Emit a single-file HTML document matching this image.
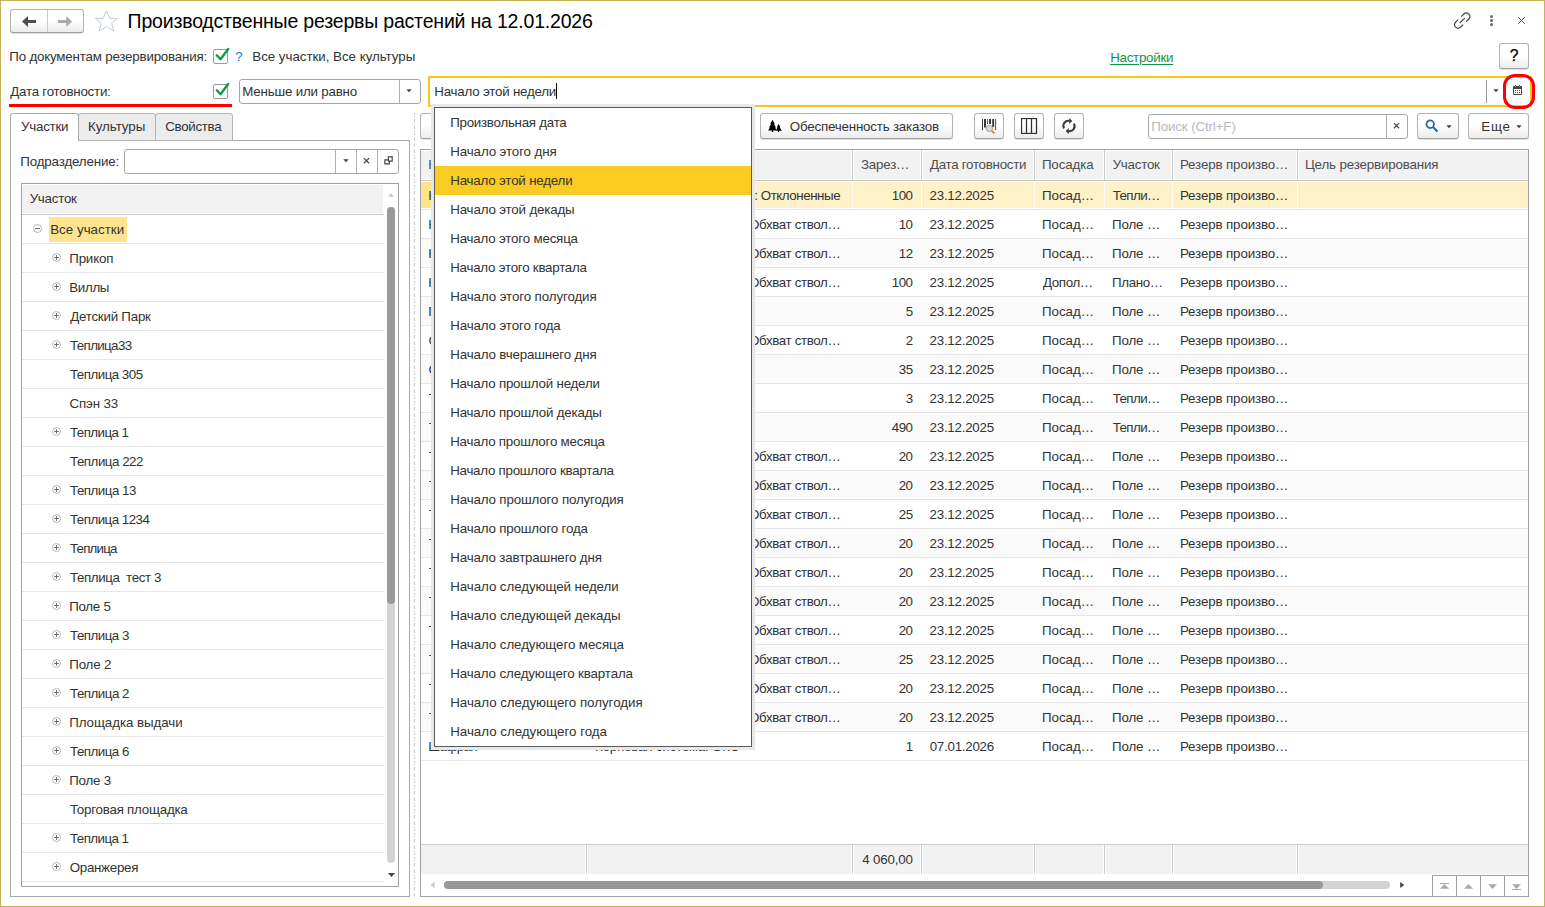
<!DOCTYPE html><html lang="ru"><head><meta charset="utf-8"><title>Производственные резервы растений</title><style>
*{box-sizing:border-box;margin:0;padding:0}
html,body{width:1545px;height:907px;overflow:hidden;background:#fff}
body{font-family:"Liberation Sans",sans-serif;font-size:13.33px;color:#333;position:relative}
.a{position:absolute}
.t{position:absolute;white-space:nowrap;line-height:18px;height:18px}
.btn{position:absolute;border:1px solid #b2b2b2;border-bottom-color:#9f9f9f;border-radius:3px;background:linear-gradient(#fff 45%,#ececec);box-shadow:0 1px 0 #e2e2e2}
.inp{position:absolute;border:1px solid #a6a6a6;border-radius:3px;background:#fff}
.hl{position:absolute;background:#e6e6e6;height:1px}
.vl{position:absolute;background:#cfcfcf;width:1px}
.row{position:absolute;left:0;height:28px}
</style></head><body>
<div class="a" style="left:0;top:0;width:1545px;height:907px;border:1px solid #c3b25a"></div>
<div class="btn" style="left:10px;top:9px;width:74px;height:24px;border-radius:3px"></div>
<div class="a" style="left:47px;top:10px;width:1px;height:22px;background:#c8c8c8"></div>
<svg class="a" style="left:10px;top:9px" width="74" height="24" viewBox="0 0 74 24"><path d="M12 12.5 L18 6.9 V11 H26 V14 H18 V18.1 Z" fill="#4d4d4d"/><path d="M62 12.5 L56.2 6.9 V11 H48 V14 H56.2 V18.1 Z" fill="#a9a9a9"/></svg>
<svg class="a" style="left:94px;top:10px" width="25" height="24" viewBox="0 0 25 24"><path d="M12.4 0.8 L15.7 8.3 H23.4 L17.5 13.4 L19.9 21.2 L12.4 16.6 L5 21.2 L7.4 13.4 L1.5 8.3 H9.2 Z" fill="#fff" stroke="#bcc5ce" stroke-width="0.9"/></svg>
<div class="t" style="left:127.62px;top:8px;letter-spacing:-0.191px;font-size:19.5px;line-height:26px;height:26px;color:#000">Производственные резервы растений на 12.01.2026</div>
<svg class="a" style="left:1451px;top:10px" width="21" height="21" viewBox="-10.5 -10.5 21 21" fill="none" stroke="#454545" stroke-width="1.15" stroke-linecap="round"><g transform="translate(0.7,0.1) rotate(-45)"><path d="M2.6 -3.5 H5.8 A3.5 3.5 0 0 1 5.8 3.5 H2.6"/><path d="M-2.6 3.5 H-5.8 A3.5 3.5 0 0 1 -5.8 -3.5 H-2.6"/><path d="M-3 0 H3.2"/></g></svg>
<div class="a" style="left:1490px;top:15.0px;width:3px;height:3px;border-radius:50%;background:#666"></div>
<div class="a" style="left:1490px;top:19.0px;width:3px;height:3px;border-radius:50%;background:#666"></div>
<div class="a" style="left:1490px;top:23.0px;width:3px;height:3px;border-radius:50%;background:#666"></div>
<svg class="a" style="left:1517px;top:16px" width="9" height="9" viewBox="0 0 9 9"><path d="M1.2 1.2 L7.8 7.8 M7.8 1.2 L1.2 7.8" stroke="#555" stroke-width="1"/></svg>
<div class="t" style="left:9.32px;top:48.0px;letter-spacing:-0.193px;">По документам резервирования:</div>
<div class="a" style="left:213px;top:49px;width:15px;height:15px;border:1px solid #9c9c9c;border-radius:2px;background:#fff"></div>
<svg class="a" style="left:213px;top:47px" width="17" height="17" viewBox="0 0 17 17"><path d="M3.8 8.3 L7.5 12.2 L15.2 2" fill="none" stroke="#0a9b48" stroke-width="2.3" stroke-linecap="round" stroke-linejoin="round"/></svg>
<div class="t" style="left:235.35px;top:48.0px;color:#1874cd">?</div>
<div class="t" style="left:252.31px;top:48.0px;letter-spacing:-0.025px;">Все участки, Все культуры</div>
<div class="t" style="left:1110.21px;top:49.0px;letter-spacing:-0.268px;color:#0c9748;text-decoration:underline;text-underline-offset:1.5px">Настройки</div>
<div class="btn" style="left:1499px;top:43px;width:30px;height:26px"></div>
<div class="t" style="left:1499px;top:47px;width:30px;text-align:center;font-size:15.6px;color:#000;-webkit-text-stroke:0.25px #000">?</div>
<div class="t" style="left:10.30px;top:83.0px;letter-spacing:-0.235px;">Дата готовности:</div>
<div class="a" style="left:213px;top:84px;width:15px;height:15px;border:1px solid #9c9c9c;border-radius:2px;background:#fff"></div>
<svg class="a" style="left:213px;top:82px" width="17" height="17" viewBox="0 0 17 17"><path d="M3.8 8.3 L7.5 12.2 L15.2 2" fill="none" stroke="#0a9b48" stroke-width="2.3" stroke-linecap="round" stroke-linejoin="round"/></svg>
<div class="inp" style="left:239px;top:79px;width:182px;height:25px"></div>
<div class="a" style="left:399px;top:80px;width:1px;height:23px;background:#b0b0b0"></div>
<div class="t" style="left:242.31px;top:83.0px;letter-spacing:-0.198px;">Меньше или равно</div>
<svg class="a" style="left:406px;top:89px" width="6" height="4" viewBox="0 0 6 4"><path d="M0.3 0.2 H5.7 L3 3.3 Z" fill="#444"/></svg>
<div class="a" style="left:9px;top:104px;width:223px;height:2.8px;background:#f00"></div>
<div class="a" style="left:428px;top:76px;width:1104px;height:31px;border:2px solid #fbc41a;border-radius:1px;background:#fff"></div>
<div class="t" style="left:434.31px;top:83.0px;letter-spacing:-0.212px;">Начало этой недели</div>
<div class="a" style="left:556px;top:83px;width:1px;height:16px;background:#000"></div>
<div class="a" style="left:1486px;top:80px;width:1px;height:23px;background:#9a9a9a"></div>
<svg class="a" style="left:1493px;top:89px" width="6" height="4" viewBox="0 0 6 4"><path d="M0.3 0.2 H5.7 L3 3.3 Z" fill="#444"/></svg>
<svg class="a" style="left:1512px;top:84px" width="11" height="12" viewBox="0 0 11 12"><rect x="1" y="2" width="9" height="9" rx="0.9" fill="#444"/><rect x="3" y="1" width="1" height="1.2" fill="#444"/><rect x="7" y="1" width="1" height="1.2" fill="#444"/><rect x="3.1" y="2.1" width="0.8" height="0.8" fill="#ddd"/><rect x="7.1" y="2.1" width="0.8" height="0.8" fill="#ddd"/><rect x="2" y="5" width="7" height="5" fill="#fff"/><g fill="#444"><rect x="3" y="6" width="1" height="1"/><rect x="5" y="6" width="1" height="1"/><rect x="7" y="6" width="1" height="1"/><rect x="3" y="8" width="1" height="1"/><rect x="5" y="8" width="1" height="1"/><rect x="7" y="8" width="1" height="1"/></g></svg>
<div class="a" style="left:1503px;top:74.3px;width:32px;height:34.4px;border:3px solid #f00;border-radius:12px"></div>
<div class="a" style="left:10px;top:140px;width:400px;height:757px;border:1px solid #a9a9a9"></div>
<div class="a" style="left:78px;top:113px;width:78px;height:28px;border:1px solid #b4b4b4;border-radius:3px 3px 0 0;background:#ececec"></div>
<div class="t" style="left:87.91px;top:118.0px;letter-spacing:-0.023px;">Культуры</div>
<div class="a" style="left:155px;top:113px;width:78px;height:28px;border:1px solid #b4b4b4;border-radius:3px 3px 0 0;background:#ececec"></div>
<div class="t" style="left:165.32px;top:118.0px;letter-spacing:-0.322px;">Свойства</div>
<div class="a" style="left:10px;top:113px;width:69px;height:28px;border:1px solid #a9a9a9;border-bottom:none;border-radius:3px 3px 0 0;background:#fff"></div>
<div class="t" style="left:21.04px;top:118.0px;letter-spacing:-0.232px;">Участки</div>
<div class="t" style="left:20.32px;top:153.0px;letter-spacing:-0.149px;">Подразделение:</div>
<div class="inp" style="left:124px;top:149px;width:275px;height:25px"></div>
<div class="a" style="left:335px;top:150px;width:1px;height:23px;background:#b0b0b0"></div>
<div class="a" style="left:356px;top:150px;width:1px;height:23px;background:#b0b0b0"></div>
<div class="a" style="left:377px;top:150px;width:1px;height:23px;background:#b0b0b0"></div>
<svg class="a" style="left:342.5px;top:158.8px" width="6" height="4" viewBox="0 0 6 4"><path d="M0.3 0.2 H5.7 L3 3.3 Z" fill="#444"/></svg>
<svg class="a" style="left:363px;top:157px" width="7" height="7" viewBox="0 0 7 7"><path d="M0.9 1.1 L6.1 6.3 M6.1 1.1 L0.9 6.3" stroke="#4a4a4a" stroke-width="1.25"/></svg>
<svg class="a" style="left:383px;top:155px" width="11" height="11" viewBox="0 0 11 11" fill="none" stroke="#444" stroke-width="1.2"><rect x="5.4" y="1.8" width="3.8" height="4.3"/><path d="M5.4 4.9 H1.9 V8.8 H6.3 V6.1"/></svg>
<div class="a" style="left:21px;top:183px;width:378px;height:704px;border:1px solid #a0a0a0;background:#fff;overflow:hidden">
<div class="a" style="left:0;top:1px;width:361px;height:28px;background:#f2f2f2"></div>
<div class="a" style="left:0;top:30px;width:362px;height:1px;background:#c8c8c8"></div>
<div class="t" style="left:7.64px;top:6.0px;letter-spacing:-0.232px;">Участок</div>
<div class="a" style="left:27px;top:32.5px;width:78px;height:25px;background:#ffe48e"></div>
<div class="t" style="left:28.21px;top:37.0px;letter-spacing:0.023px;white-space:pre">Все участки</div>
<svg class="a" style="left:11.0px;top:40.0px" width="9" height="9" viewBox="0 0 9 9"><circle cx="4.5" cy="4.5" r="4" fill="#fff" stroke="#b8b8b8" stroke-width="1"/><path d="M2 4.5 H7" stroke="#6e6e6e" stroke-width="1"/></svg>
<div class="hl" style="left:0;top:59px;width:362px"></div>
<div class="t" style="left:47.22px;top:66.0px;letter-spacing:-0.172px;white-space:pre">Прикоп</div>
<svg class="a" style="left:30.0px;top:69.0px" width="9" height="9" viewBox="0 0 9 9"><circle cx="4.5" cy="4.5" r="4" fill="#fff" stroke="#b8b8b8" stroke-width="1"/><path d="M2.1 4.5 H6.9 M4.5 2.1 V6.9" stroke="#6e6e6e" stroke-width="1"/></svg>
<div class="hl" style="left:0;top:88px;width:362px"></div>
<div class="t" style="left:47.21px;top:95.0px;letter-spacing:-0.313px;white-space:pre">Виллы</div>
<svg class="a" style="left:30.0px;top:98.0px" width="9" height="9" viewBox="0 0 9 9"><circle cx="4.5" cy="4.5" r="4" fill="#fff" stroke="#b8b8b8" stroke-width="1"/><path d="M2.1 4.5 H6.9 M4.5 2.1 V6.9" stroke="#6e6e6e" stroke-width="1"/></svg>
<div class="hl" style="left:0;top:117px;width:362px"></div>
<div class="t" style="left:48.20px;top:124.0px;letter-spacing:-0.232px;white-space:pre">Детский Парк</div>
<svg class="a" style="left:30.0px;top:127.0px" width="9" height="9" viewBox="0 0 9 9"><circle cx="4.5" cy="4.5" r="4" fill="#fff" stroke="#b8b8b8" stroke-width="1"/><path d="M2.1 4.5 H6.9 M4.5 2.1 V6.9" stroke="#6e6e6e" stroke-width="1"/></svg>
<div class="hl" style="left:0;top:146px;width:362px"></div>
<div class="t" style="left:48.00px;top:153.0px;letter-spacing:-0.630px;white-space:pre">Теплица33</div>
<svg class="a" style="left:30.0px;top:156.0px" width="9" height="9" viewBox="0 0 9 9"><circle cx="4.5" cy="4.5" r="4" fill="#fff" stroke="#b8b8b8" stroke-width="1"/><path d="M2.1 4.5 H6.9 M4.5 2.1 V6.9" stroke="#6e6e6e" stroke-width="1"/></svg>
<div class="hl" style="left:0;top:175px;width:362px"></div>
<div class="t" style="left:48.00px;top:182.0px;letter-spacing:-0.518px;white-space:pre">Теплица 305</div>
<div class="hl" style="left:0;top:204px;width:362px"></div>
<div class="t" style="left:47.62px;top:211.0px;letter-spacing:-0.181px;white-space:pre">Спэн 33</div>
<div class="hl" style="left:0;top:233px;width:362px"></div>
<div class="t" style="left:48.00px;top:240.0px;letter-spacing:-0.563px;white-space:pre">Теплица 1</div>
<svg class="a" style="left:30.0px;top:243.0px" width="9" height="9" viewBox="0 0 9 9"><circle cx="4.5" cy="4.5" r="4" fill="#fff" stroke="#b8b8b8" stroke-width="1"/><path d="M2.1 4.5 H6.9 M4.5 2.1 V6.9" stroke="#6e6e6e" stroke-width="1"/></svg>
<div class="hl" style="left:0;top:262px;width:362px"></div>
<div class="t" style="left:48.00px;top:269.0px;letter-spacing:-0.481px;white-space:pre">Теплица 222</div>
<div class="hl" style="left:0;top:291px;width:362px"></div>
<div class="t" style="left:48.00px;top:298.0px;letter-spacing:-0.499px;white-space:pre">Теплица 13</div>
<svg class="a" style="left:30.0px;top:301.0px" width="9" height="9" viewBox="0 0 9 9"><circle cx="4.5" cy="4.5" r="4" fill="#fff" stroke="#b8b8b8" stroke-width="1"/><path d="M2.1 4.5 H6.9 M4.5 2.1 V6.9" stroke="#6e6e6e" stroke-width="1"/></svg>
<div class="hl" style="left:0;top:320px;width:362px"></div>
<div class="t" style="left:48.00px;top:327.0px;letter-spacing:-0.524px;white-space:pre">Теплица 1234</div>
<svg class="a" style="left:30.0px;top:330.0px" width="9" height="9" viewBox="0 0 9 9"><circle cx="4.5" cy="4.5" r="4" fill="#fff" stroke="#b8b8b8" stroke-width="1"/><path d="M2.1 4.5 H6.9 M4.5 2.1 V6.9" stroke="#6e6e6e" stroke-width="1"/></svg>
<div class="hl" style="left:0;top:349px;width:362px"></div>
<div class="t" style="left:48.00px;top:356.0px;letter-spacing:-0.800px;white-space:pre">Теплица</div>
<svg class="a" style="left:30.0px;top:359.0px" width="9" height="9" viewBox="0 0 9 9"><circle cx="4.5" cy="4.5" r="4" fill="#fff" stroke="#b8b8b8" stroke-width="1"/><path d="M2.1 4.5 H6.9 M4.5 2.1 V6.9" stroke="#6e6e6e" stroke-width="1"/></svg>
<div class="hl" style="left:0;top:378px;width:362px"></div>
<div class="t" style="left:48.00px;top:385.0px;letter-spacing:-0.401px;white-space:pre">Теплица  тест 3</div>
<svg class="a" style="left:30.0px;top:388.0px" width="9" height="9" viewBox="0 0 9 9"><circle cx="4.5" cy="4.5" r="4" fill="#fff" stroke="#b8b8b8" stroke-width="1"/><path d="M2.1 4.5 H6.9 M4.5 2.1 V6.9" stroke="#6e6e6e" stroke-width="1"/></svg>
<div class="hl" style="left:0;top:407px;width:362px"></div>
<div class="t" style="left:47.22px;top:414.0px;letter-spacing:-0.285px;white-space:pre">Поле 5</div>
<svg class="a" style="left:30.0px;top:417.0px" width="9" height="9" viewBox="0 0 9 9"><circle cx="4.5" cy="4.5" r="4" fill="#fff" stroke="#b8b8b8" stroke-width="1"/><path d="M2.1 4.5 H6.9 M4.5 2.1 V6.9" stroke="#6e6e6e" stroke-width="1"/></svg>
<div class="hl" style="left:0;top:436px;width:362px"></div>
<div class="t" style="left:48.00px;top:443.0px;letter-spacing:-0.509px;white-space:pre">Теплица 3</div>
<svg class="a" style="left:30.0px;top:446.0px" width="9" height="9" viewBox="0 0 9 9"><circle cx="4.5" cy="4.5" r="4" fill="#fff" stroke="#b8b8b8" stroke-width="1"/><path d="M2.1 4.5 H6.9 M4.5 2.1 V6.9" stroke="#6e6e6e" stroke-width="1"/></svg>
<div class="hl" style="left:0;top:465px;width:362px"></div>
<div class="t" style="left:47.22px;top:472.0px;letter-spacing:-0.163px;white-space:pre">Поле 2</div>
<svg class="a" style="left:30.0px;top:475.0px" width="9" height="9" viewBox="0 0 9 9"><circle cx="4.5" cy="4.5" r="4" fill="#fff" stroke="#b8b8b8" stroke-width="1"/><path d="M2.1 4.5 H6.9 M4.5 2.1 V6.9" stroke="#6e6e6e" stroke-width="1"/></svg>
<div class="hl" style="left:0;top:494px;width:362px"></div>
<div class="t" style="left:48.00px;top:501.0px;letter-spacing:-0.498px;white-space:pre">Теплица 2</div>
<svg class="a" style="left:30.0px;top:504.0px" width="9" height="9" viewBox="0 0 9 9"><circle cx="4.5" cy="4.5" r="4" fill="#fff" stroke="#b8b8b8" stroke-width="1"/><path d="M2.1 4.5 H6.9 M4.5 2.1 V6.9" stroke="#6e6e6e" stroke-width="1"/></svg>
<div class="hl" style="left:0;top:523px;width:362px"></div>
<div class="t" style="left:47.22px;top:530.0px;letter-spacing:-0.058px;white-space:pre">Площадка выдачи</div>
<svg class="a" style="left:30.0px;top:533.0px" width="9" height="9" viewBox="0 0 9 9"><circle cx="4.5" cy="4.5" r="4" fill="#fff" stroke="#b8b8b8" stroke-width="1"/><path d="M2.1 4.5 H6.9 M4.5 2.1 V6.9" stroke="#6e6e6e" stroke-width="1"/></svg>
<div class="hl" style="left:0;top:552px;width:362px"></div>
<div class="t" style="left:48.00px;top:559.0px;letter-spacing:-0.509px;white-space:pre">Теплица 6</div>
<svg class="a" style="left:30.0px;top:562.0px" width="9" height="9" viewBox="0 0 9 9"><circle cx="4.5" cy="4.5" r="4" fill="#fff" stroke="#b8b8b8" stroke-width="1"/><path d="M2.1 4.5 H6.9 M4.5 2.1 V6.9" stroke="#6e6e6e" stroke-width="1"/></svg>
<div class="hl" style="left:0;top:581px;width:362px"></div>
<div class="t" style="left:47.22px;top:588.0px;letter-spacing:-0.230px;white-space:pre">Поле 3</div>
<svg class="a" style="left:30.0px;top:591.0px" width="9" height="9" viewBox="0 0 9 9"><circle cx="4.5" cy="4.5" r="4" fill="#fff" stroke="#b8b8b8" stroke-width="1"/><path d="M2.1 4.5 H6.9 M4.5 2.1 V6.9" stroke="#6e6e6e" stroke-width="1"/></svg>
<div class="hl" style="left:0;top:610px;width:362px"></div>
<div class="t" style="left:48.00px;top:617.0px;letter-spacing:-0.230px;white-space:pre">Торговая площадка</div>
<div class="hl" style="left:0;top:639px;width:362px"></div>
<div class="t" style="left:48.00px;top:646.0px;letter-spacing:-0.563px;white-space:pre">Теплица 1</div>
<svg class="a" style="left:30.0px;top:649.0px" width="9" height="9" viewBox="0 0 9 9"><circle cx="4.5" cy="4.5" r="4" fill="#fff" stroke="#b8b8b8" stroke-width="1"/><path d="M2.1 4.5 H6.9 M4.5 2.1 V6.9" stroke="#6e6e6e" stroke-width="1"/></svg>
<div class="hl" style="left:0;top:668px;width:362px"></div>
<div class="t" style="left:47.67px;top:675.0px;letter-spacing:-0.273px;white-space:pre">Оранжерея</div>
<svg class="a" style="left:30.0px;top:678.0px" width="9" height="9" viewBox="0 0 9 9"><circle cx="4.5" cy="4.5" r="4" fill="#fff" stroke="#b8b8b8" stroke-width="1"/><path d="M2.1 4.5 H6.9 M4.5 2.1 V6.9" stroke="#6e6e6e" stroke-width="1"/></svg>
<div class="hl" style="left:0;top:697px;width:362px"></div>
<svg class="a" style="left:366px;top:9px" width="6" height="4" viewBox="0 0 6 4"><path d="M0 3.8 H6 L3 0.3 Z" fill="#c8c8c8"/></svg>
<div class="a" style="left:365.3px;top:23px;width:7.6px;height:656px;border-radius:4px;background:#d3d3d3"></div>
<div class="a" style="left:365.3px;top:23px;width:7.6px;height:397px;border-radius:4px;background:#9a9a9a"></div>
<svg class="a" style="left:366px;top:689px" width="7" height="4" viewBox="0 0 7 4"><path d="M0 0 H7 L3.5 4 Z" fill="#444"/></svg>
</div>
<div class="a" style="left:414px;top:113px;width:1px;height:784px;background:repeating-linear-gradient(#d0d0d0 0,#d0d0d0 4px,transparent 4px,transparent 6px)"></div>
<div class="btn" style="left:420px;top:113px;width:60px;height:26px"></div>
<div class="btn" style="left:760px;top:113px;width:193px;height:26px"></div>
<svg class="a" style="left:767px;top:119px" width="16" height="14" viewBox="0 0 16 14" fill="#000"><path d="M5.5 0.8 L7.7 5 L7.1 5.2 L8.9 8.4 L8.1 8.6 L9.7 11.6 H6.2 V13 H4.8 V11.6 H1.1 L2.9 8.6 L2.1 8.4 L3.9 5.2 L3.3 5 Z"/><path d="M11.6 4.8 L13.3 8.2 L12.8 8.4 L14.9 11.8 H12.2 V13 H11 V11.8 H8.9 L10.4 8.4 L9.9 8.2 Z"/></svg>
<div class="t" style="left:789.77px;top:118.0px;letter-spacing:-0.190px;">Обеспеченность заказов</div>
<div class="btn" style="left:974px;top:113px;width:30px;height:26px"></div>
<div class="btn" style="left:1014px;top:113px;width:30px;height:26px"></div>
<div class="btn" style="left:1054px;top:113px;width:30px;height:26px"></div>
<svg class="a" style="left:981px;top:118px" width="17" height="17" viewBox="0 0 17 17"><g fill="#3a3a3a"><rect x="1" y="1" width="1" height="11"/><rect x="3" y="1" width="2" height="8.5"/><rect x="6" y="1" width="0.8" height="5"/><rect x="8" y="1" width="2" height="5"/><rect x="11.2" y="1" width="1.9" height="8"/><rect x="14.2" y="1" width="0.9" height="11"/></g><circle cx="8.4" cy="10.4" r="3.1" fill="#c9dcf6" stroke="#bf9a7c" stroke-width="1"/><path d="M10.8 12.8 L13.4 15.5" stroke="#b9845a" stroke-width="1.8"/></svg>
<svg class="a" style="left:1021px;top:118px" width="17" height="16" viewBox="0 0 17 16" fill="none" stroke="#303030" stroke-width="1.25"><rect x="0.5" y="0.5" width="15" height="15"/><path d="M5.5 0.5 V15.5 M10.5 0.5 V15.5"/></svg>
<svg class="a" style="left:1061px;top:117px" width="16" height="18" viewBox="0 0 16 18" fill="none" stroke="#3a3a3a" stroke-width="2"><path d="M3.2 11.4 A4.9 4.9 0 0 1 8.6 4"/><path d="M12.8 6.6 A4.9 4.9 0 0 1 7.4 14"/><path d="M8.2 1 L11.3 4 L8.2 7 Z" fill="#3a3a3a" stroke="none"/><path d="M7.8 11.1 L4.7 14 L7.8 17 Z" fill="#3a3a3a" stroke="none"/></svg>
<div class="inp" style="left:1148px;top:114px;width:260px;height:25px"></div>
<div class="a" style="left:1386px;top:115px;width:1px;height:23px;background:#b0b0b0"></div>
<div class="t" style="left:1151.22px;top:118.0px;letter-spacing:-0.120px;color:#b8b8b8">Поиск (Ctrl+F)</div>
<svg class="a" style="left:1393px;top:122px" width="7" height="7" viewBox="0 0 7 7"><path d="M0.9 1.1 L6.1 6.3 M6.1 1.1 L0.9 6.3" stroke="#4a4a4a" stroke-width="1.25"/></svg>
<div class="btn" style="left:1417px;top:113px;width:42px;height:26px"></div>
<svg class="a" style="left:1425px;top:119px" width="14" height="14" viewBox="0 0 14 14" fill="none"><circle cx="5.2" cy="5.2" r="3.8" stroke="#2a6da0" stroke-width="1.8"/><path d="M8 8 L12.5 12.5" stroke="#2a6da0" stroke-width="2.2"/></svg>
<svg class="a" style="left:1445.5px;top:125px" width="6" height="4" viewBox="0 0 6 4"><path d="M0.3 0.2 H5.7 L3 3.3 Z" fill="#444"/></svg>
<div class="btn" style="left:1468px;top:113px;width:61px;height:26px"></div>
<div class="t" style="left:1481.31px;top:118.0px;letter-spacing:0.780px;">Еще</div>
<svg class="a" style="left:1516px;top:125px" width="6" height="4" viewBox="0 0 6 4"><path d="M0.3 0.2 H5.7 L3 3.3 Z" fill="#444"/></svg>
<div class="a" style="left:420px;top:149px;width:1109px;height:748px;border:1px solid #a0a0a0;background:#fff;overflow:hidden">
<div class="a" style="left:0;top:1px;width:1107px;height:28px;background:#f2f2f2"></div>
<div class="a" style="left:0;top:30px;width:1107px;height:1px;background:#c6c6c6"></div>
<div class="a" style="left:164px;top:0;width:3px;height:30px;background:#fff"></div>
<div class="vl" style="left:165px;top:0;height:30px"></div>
<div class="a" style="left:430px;top:0;width:3px;height:30px;background:#fff"></div>
<div class="vl" style="left:431px;top:0;height:30px"></div>
<div class="a" style="left:499px;top:0;width:3px;height:30px;background:#fff"></div>
<div class="vl" style="left:500px;top:0;height:30px"></div>
<div class="a" style="left:612px;top:0;width:3px;height:30px;background:#fff"></div>
<div class="vl" style="left:613px;top:0;height:30px"></div>
<div class="a" style="left:682px;top:0;width:3px;height:30px;background:#fff"></div>
<div class="vl" style="left:683px;top:0;height:30px"></div>
<div class="a" style="left:750px;top:0;width:3px;height:30px;background:#fff"></div>
<div class="vl" style="left:751px;top:0;height:30px"></div>
<div class="a" style="left:875px;top:0;width:3px;height:30px;background:#fff"></div>
<div class="vl" style="left:876px;top:0;height:30px"></div>
<div class="t" style="left:439.96px;top:6.0px;letter-spacing:-0.198px;color:#4d4d4d">Зарез…</div>
<div class="t" style="left:508.90px;top:6.0px;letter-spacing:-0.266px;color:#4d4d4d">Дата готовности</div>
<div class="t" style="left:620.92px;top:6.0px;letter-spacing:-0.118px;color:#4d4d4d">Посадка</div>
<div class="t" style="left:691.64px;top:6.0px;letter-spacing:-0.232px;color:#4d4d4d">Участок</div>
<div class="t" style="left:758.91px;top:6.0px;letter-spacing:-0.126px;color:#4d4d4d">Резерв произво…</div>
<div class="t" style="left:883.91px;top:6.0px;letter-spacing:-0.149px;color:#4d4d4d">Цель резервирования</div>
<div class="t" style="left:7.21px;top:6.0px;color:#4d4d4d">Номенклатура</div>
<div class="t" style="left:173.70px;top:6.0px;color:#4d4d4d">Характеристика</div>
<div class="a" style="left:0;top:32px;width:1107px;height:26px;background:#fff2c9"></div>
<div class="a" style="left:165px;top:31px;width:1px;height:28px;background:#fffdf6"></div>
<div class="a" style="left:431px;top:31px;width:1px;height:28px;background:#fffdf6"></div>
<div class="a" style="left:500px;top:31px;width:1px;height:28px;background:#fffdf6"></div>
<div class="a" style="left:613px;top:31px;width:1px;height:28px;background:#fffdf6"></div>
<div class="a" style="left:683px;top:31px;width:1px;height:28px;background:#fffdf6"></div>
<div class="a" style="left:751px;top:31px;width:1px;height:28px;background:#fffdf6"></div>
<div class="a" style="left:876px;top:31px;width:1px;height:28px;background:#fffdf6"></div>
<div class="a" style="left:0;top:32px;width:13px;height:26px;background:#ffe48e"></div>
<div class="hl" style="left:0;top:59px;width:1107px"></div>
<div class="t" style="left:7.21px;top:37.0px;">Клен остролистный</div>
<div class="t" style="left:145.99px;top:37.0px;letter-spacing:-0.440px;">Корневая система: ОКС; Побеги: Отклоненные</div>
<div class="t" style="left:470.77px;top:37.0px;letter-spacing:-0.500px;">100</div>
<div class="t" style="left:508.53px;top:37.0px;letter-spacing:-0.232px;">23.12.2025</div>
<div class="t" style="left:620.92px;top:37.0px;letter-spacing:0.020px;">Посад…</div>
<div class="t" style="left:691.70px;top:37.0px;letter-spacing:-0.574px;">Тепли…</div>
<div class="t" style="left:758.91px;top:37.0px;letter-spacing:-0.126px;">Резерв произво…</div>
<div class="a" style="left:0;top:60px;width:1107px;height:28px;background:#fff"></div>
<div class="hl" style="left:0;top:88px;width:1107px"></div>
<div class="t" style="left:7.21px;top:66.0px;">Клен остролистный</div>
<div class="t" style="left:180.64px;top:66.0px;letter-spacing:-0.360px;">Корневая система: ОКС; Обхват ствол…</div>
<div class="t" style="left:477.69px;top:66.0px;letter-spacing:-0.500px;">10</div>
<div class="t" style="left:508.53px;top:66.0px;letter-spacing:-0.232px;">23.12.2025</div>
<div class="t" style="left:620.92px;top:66.0px;letter-spacing:0.020px;">Посад…</div>
<div class="t" style="left:690.92px;top:66.0px;letter-spacing:-0.086px;">Поле …</div>
<div class="t" style="left:758.91px;top:66.0px;letter-spacing:-0.126px;">Резерв произво…</div>
<div class="a" style="left:0;top:89px;width:1107px;height:28px;background:#fafafa"></div>
<div class="hl" style="left:0;top:117px;width:1107px"></div>
<div class="t" style="left:7.21px;top:95.0px;">Клен остролистный</div>
<div class="t" style="left:180.64px;top:95.0px;letter-spacing:-0.360px;">Корневая система: ОКС; Обхват ствол…</div>
<div class="t" style="left:477.84px;top:95.0px;letter-spacing:-0.500px;">12</div>
<div class="t" style="left:508.53px;top:95.0px;letter-spacing:-0.232px;">23.12.2025</div>
<div class="t" style="left:620.92px;top:95.0px;letter-spacing:0.020px;">Посад…</div>
<div class="t" style="left:690.92px;top:95.0px;letter-spacing:-0.086px;">Поле …</div>
<div class="t" style="left:758.91px;top:95.0px;letter-spacing:-0.126px;">Резерв произво…</div>
<div class="a" style="left:0;top:118px;width:1107px;height:28px;background:#fff"></div>
<div class="hl" style="left:0;top:146px;width:1107px"></div>
<div class="t" style="left:7.21px;top:124.0px;">Клен остролистный</div>
<div class="t" style="left:180.64px;top:124.0px;letter-spacing:-0.360px;">Корневая система: ОКС; Обхват ствол…</div>
<div class="t" style="left:470.77px;top:124.0px;letter-spacing:-0.500px;">100</div>
<div class="t" style="left:508.53px;top:124.0px;letter-spacing:-0.232px;">23.12.2025</div>
<div class="t" style="left:621.90px;top:124.0px;letter-spacing:-0.345px;">Допол…</div>
<div class="t" style="left:690.92px;top:124.0px;letter-spacing:-0.317px;">Плано…</div>
<div class="t" style="left:758.91px;top:124.0px;letter-spacing:-0.126px;">Резерв произво…</div>
<div class="a" style="left:0;top:147px;width:1107px;height:28px;background:#fafafa"></div>
<div class="hl" style="left:0;top:175px;width:1107px"></div>
<div class="t" style="left:7.22px;top:153.0px;">Пихта корейская</div>
<div class="t" style="left:173.91px;top:153.0px;letter-spacing:-0.200px;">Корневая система: ОКС</div>
<div class="t" style="left:484.64px;top:153.0px;letter-spacing:-0.500px;">5</div>
<div class="t" style="left:508.53px;top:153.0px;letter-spacing:-0.232px;">23.12.2025</div>
<div class="t" style="left:620.92px;top:153.0px;letter-spacing:0.020px;">Посад…</div>
<div class="t" style="left:690.92px;top:153.0px;letter-spacing:-0.086px;">Поле …</div>
<div class="t" style="left:758.91px;top:153.0px;letter-spacing:-0.126px;">Резерв произво…</div>
<div class="a" style="left:0;top:176px;width:1107px;height:28px;background:#fff"></div>
<div class="hl" style="left:0;top:204px;width:1107px"></div>
<div class="t" style="left:7.62px;top:182.0px;">Сосна горная</div>
<div class="t" style="left:180.64px;top:182.0px;letter-spacing:-0.360px;">Корневая система: ОКС; Обхват ствол…</div>
<div class="t" style="left:484.75px;top:182.0px;letter-spacing:-0.500px;">2</div>
<div class="t" style="left:508.53px;top:182.0px;letter-spacing:-0.232px;">23.12.2025</div>
<div class="t" style="left:620.92px;top:182.0px;letter-spacing:0.020px;">Посад…</div>
<div class="t" style="left:690.92px;top:182.0px;letter-spacing:-0.086px;">Поле …</div>
<div class="t" style="left:758.91px;top:182.0px;letter-spacing:-0.126px;">Резерв произво…</div>
<div class="a" style="left:0;top:205px;width:1107px;height:28px;background:#fafafa"></div>
<div class="hl" style="left:0;top:233px;width:1107px"></div>
<div class="t" style="left:7.62px;top:211.0px;">Сосна горная</div>
<div class="t" style="left:173.91px;top:211.0px;letter-spacing:-0.200px;">Корневая система: ОКС</div>
<div class="t" style="left:477.73px;top:211.0px;letter-spacing:-0.500px;">35</div>
<div class="t" style="left:508.53px;top:211.0px;letter-spacing:-0.232px;">23.12.2025</div>
<div class="t" style="left:620.92px;top:211.0px;letter-spacing:0.020px;">Посад…</div>
<div class="t" style="left:690.92px;top:211.0px;letter-spacing:-0.086px;">Поле …</div>
<div class="t" style="left:758.91px;top:211.0px;letter-spacing:-0.126px;">Резерв произво…</div>
<div class="a" style="left:0;top:234px;width:1107px;height:28px;background:#fff"></div>
<div class="hl" style="left:0;top:262px;width:1107px"></div>
<div class="t" style="left:8.00px;top:240.0px;">Туя западная</div>
<div class="t" style="left:173.91px;top:240.0px;letter-spacing:-0.200px;">Корневая система: ОКС</div>
<div class="t" style="left:484.66px;top:240.0px;letter-spacing:-0.500px;">3</div>
<div class="t" style="left:508.53px;top:240.0px;letter-spacing:-0.232px;">23.12.2025</div>
<div class="t" style="left:620.92px;top:240.0px;letter-spacing:0.020px;">Посад…</div>
<div class="t" style="left:691.70px;top:240.0px;letter-spacing:-0.574px;">Тепли…</div>
<div class="t" style="left:758.91px;top:240.0px;letter-spacing:-0.126px;">Резерв произво…</div>
<div class="a" style="left:0;top:263px;width:1107px;height:28px;background:#fafafa"></div>
<div class="hl" style="left:0;top:291px;width:1107px"></div>
<div class="t" style="left:8.00px;top:269.0px;">Туя западная</div>
<div class="t" style="left:173.91px;top:269.0px;letter-spacing:-0.200px;">Корневая система: ОКС</div>
<div class="t" style="left:470.77px;top:269.0px;letter-spacing:-0.500px;">490</div>
<div class="t" style="left:508.53px;top:269.0px;letter-spacing:-0.232px;">23.12.2025</div>
<div class="t" style="left:620.92px;top:269.0px;letter-spacing:0.020px;">Посад…</div>
<div class="t" style="left:691.70px;top:269.0px;letter-spacing:-0.574px;">Тепли…</div>
<div class="t" style="left:758.91px;top:269.0px;letter-spacing:-0.126px;">Резерв произво…</div>
<div class="a" style="left:0;top:292px;width:1107px;height:28px;background:#fff"></div>
<div class="hl" style="left:0;top:320px;width:1107px"></div>
<div class="t" style="left:8.00px;top:298.0px;">Туя западная</div>
<div class="t" style="left:180.64px;top:298.0px;letter-spacing:-0.360px;">Корневая система: ОКС; Обхват ствол…</div>
<div class="t" style="left:477.69px;top:298.0px;letter-spacing:-0.500px;">20</div>
<div class="t" style="left:508.53px;top:298.0px;letter-spacing:-0.232px;">23.12.2025</div>
<div class="t" style="left:620.92px;top:298.0px;letter-spacing:0.020px;">Посад…</div>
<div class="t" style="left:690.92px;top:298.0px;letter-spacing:-0.086px;">Поле …</div>
<div class="t" style="left:758.91px;top:298.0px;letter-spacing:-0.126px;">Резерв произво…</div>
<div class="a" style="left:0;top:321px;width:1107px;height:28px;background:#fafafa"></div>
<div class="hl" style="left:0;top:349px;width:1107px"></div>
<div class="t" style="left:8.00px;top:327.0px;">Туя западная</div>
<div class="t" style="left:180.64px;top:327.0px;letter-spacing:-0.360px;">Корневая система: ОКС; Обхват ствол…</div>
<div class="t" style="left:477.69px;top:327.0px;letter-spacing:-0.500px;">20</div>
<div class="t" style="left:508.53px;top:327.0px;letter-spacing:-0.232px;">23.12.2025</div>
<div class="t" style="left:620.92px;top:327.0px;letter-spacing:0.020px;">Посад…</div>
<div class="t" style="left:690.92px;top:327.0px;letter-spacing:-0.086px;">Поле …</div>
<div class="t" style="left:758.91px;top:327.0px;letter-spacing:-0.126px;">Резерв произво…</div>
<div class="a" style="left:0;top:350px;width:1107px;height:28px;background:#fff"></div>
<div class="hl" style="left:0;top:378px;width:1107px"></div>
<div class="t" style="left:8.00px;top:356.0px;">Туя западная</div>
<div class="t" style="left:180.64px;top:356.0px;letter-spacing:-0.360px;">Корневая система: ОКС; Обхват ствол…</div>
<div class="t" style="left:477.73px;top:356.0px;letter-spacing:-0.500px;">25</div>
<div class="t" style="left:508.53px;top:356.0px;letter-spacing:-0.232px;">23.12.2025</div>
<div class="t" style="left:620.92px;top:356.0px;letter-spacing:0.020px;">Посад…</div>
<div class="t" style="left:690.92px;top:356.0px;letter-spacing:-0.086px;">Поле …</div>
<div class="t" style="left:758.91px;top:356.0px;letter-spacing:-0.126px;">Резерв произво…</div>
<div class="a" style="left:0;top:379px;width:1107px;height:28px;background:#fafafa"></div>
<div class="hl" style="left:0;top:407px;width:1107px"></div>
<div class="t" style="left:8.00px;top:385.0px;">Туя западная</div>
<div class="t" style="left:180.64px;top:385.0px;letter-spacing:-0.360px;">Корневая система: ОКС; Обхват ствол…</div>
<div class="t" style="left:477.69px;top:385.0px;letter-spacing:-0.500px;">20</div>
<div class="t" style="left:508.53px;top:385.0px;letter-spacing:-0.232px;">23.12.2025</div>
<div class="t" style="left:620.92px;top:385.0px;letter-spacing:0.020px;">Посад…</div>
<div class="t" style="left:690.92px;top:385.0px;letter-spacing:-0.086px;">Поле …</div>
<div class="t" style="left:758.91px;top:385.0px;letter-spacing:-0.126px;">Резерв произво…</div>
<div class="a" style="left:0;top:408px;width:1107px;height:28px;background:#fff"></div>
<div class="hl" style="left:0;top:436px;width:1107px"></div>
<div class="t" style="left:8.00px;top:414.0px;">Туя западная</div>
<div class="t" style="left:180.64px;top:414.0px;letter-spacing:-0.360px;">Корневая система: ОКС; Обхват ствол…</div>
<div class="t" style="left:477.69px;top:414.0px;letter-spacing:-0.500px;">20</div>
<div class="t" style="left:508.53px;top:414.0px;letter-spacing:-0.232px;">23.12.2025</div>
<div class="t" style="left:620.92px;top:414.0px;letter-spacing:0.020px;">Посад…</div>
<div class="t" style="left:690.92px;top:414.0px;letter-spacing:-0.086px;">Поле …</div>
<div class="t" style="left:758.91px;top:414.0px;letter-spacing:-0.126px;">Резерв произво…</div>
<div class="a" style="left:0;top:437px;width:1107px;height:28px;background:#fafafa"></div>
<div class="hl" style="left:0;top:465px;width:1107px"></div>
<div class="t" style="left:8.00px;top:443.0px;">Туя западная</div>
<div class="t" style="left:180.64px;top:443.0px;letter-spacing:-0.360px;">Корневая система: ОКС; Обхват ствол…</div>
<div class="t" style="left:477.69px;top:443.0px;letter-spacing:-0.500px;">20</div>
<div class="t" style="left:508.53px;top:443.0px;letter-spacing:-0.232px;">23.12.2025</div>
<div class="t" style="left:620.92px;top:443.0px;letter-spacing:0.020px;">Посад…</div>
<div class="t" style="left:690.92px;top:443.0px;letter-spacing:-0.086px;">Поле …</div>
<div class="t" style="left:758.91px;top:443.0px;letter-spacing:-0.126px;">Резерв произво…</div>
<div class="a" style="left:0;top:466px;width:1107px;height:28px;background:#fff"></div>
<div class="hl" style="left:0;top:494px;width:1107px"></div>
<div class="t" style="left:8.00px;top:472.0px;">Туя западная</div>
<div class="t" style="left:180.64px;top:472.0px;letter-spacing:-0.360px;">Корневая система: ОКС; Обхват ствол…</div>
<div class="t" style="left:477.69px;top:472.0px;letter-spacing:-0.500px;">20</div>
<div class="t" style="left:508.53px;top:472.0px;letter-spacing:-0.232px;">23.12.2025</div>
<div class="t" style="left:620.92px;top:472.0px;letter-spacing:0.020px;">Посад…</div>
<div class="t" style="left:690.92px;top:472.0px;letter-spacing:-0.086px;">Поле …</div>
<div class="t" style="left:758.91px;top:472.0px;letter-spacing:-0.126px;">Резерв произво…</div>
<div class="a" style="left:0;top:495px;width:1107px;height:28px;background:#fafafa"></div>
<div class="hl" style="left:0;top:523px;width:1107px"></div>
<div class="t" style="left:8.00px;top:501.0px;">Туя западная</div>
<div class="t" style="left:180.64px;top:501.0px;letter-spacing:-0.360px;">Корневая система: ОКС; Обхват ствол…</div>
<div class="t" style="left:477.73px;top:501.0px;letter-spacing:-0.500px;">25</div>
<div class="t" style="left:508.53px;top:501.0px;letter-spacing:-0.232px;">23.12.2025</div>
<div class="t" style="left:620.92px;top:501.0px;letter-spacing:0.020px;">Посад…</div>
<div class="t" style="left:690.92px;top:501.0px;letter-spacing:-0.086px;">Поле …</div>
<div class="t" style="left:758.91px;top:501.0px;letter-spacing:-0.126px;">Резерв произво…</div>
<div class="a" style="left:0;top:524px;width:1107px;height:28px;background:#fff"></div>
<div class="hl" style="left:0;top:552px;width:1107px"></div>
<div class="t" style="left:8.00px;top:530.0px;">Туя западная</div>
<div class="t" style="left:180.64px;top:530.0px;letter-spacing:-0.360px;">Корневая система: ОКС; Обхват ствол…</div>
<div class="t" style="left:477.69px;top:530.0px;letter-spacing:-0.500px;">20</div>
<div class="t" style="left:508.53px;top:530.0px;letter-spacing:-0.232px;">23.12.2025</div>
<div class="t" style="left:620.92px;top:530.0px;letter-spacing:0.020px;">Посад…</div>
<div class="t" style="left:690.92px;top:530.0px;letter-spacing:-0.086px;">Поле …</div>
<div class="t" style="left:758.91px;top:530.0px;letter-spacing:-0.126px;">Резерв произво…</div>
<div class="a" style="left:0;top:553px;width:1107px;height:28px;background:#fafafa"></div>
<div class="hl" style="left:0;top:581px;width:1107px"></div>
<div class="t" style="left:8.00px;top:559.0px;">Туя западная</div>
<div class="t" style="left:180.64px;top:559.0px;letter-spacing:-0.360px;">Корневая система: ОКС; Обхват ствол…</div>
<div class="t" style="left:477.69px;top:559.0px;letter-spacing:-0.500px;">20</div>
<div class="t" style="left:508.53px;top:559.0px;letter-spacing:-0.232px;">23.12.2025</div>
<div class="t" style="left:620.92px;top:559.0px;letter-spacing:0.020px;">Посад…</div>
<div class="t" style="left:690.92px;top:559.0px;letter-spacing:-0.086px;">Поле …</div>
<div class="t" style="left:758.91px;top:559.0px;letter-spacing:-0.126px;">Резерв произво…</div>
<div class="a" style="left:0;top:582px;width:1107px;height:28px;background:#fff"></div>
<div class="hl" style="left:0;top:610px;width:1107px"></div>
<div class="t" style="left:7.21px;top:588.0px;letter-spacing:-0.693px;">Шафран</div>
<div class="t" style="left:173.91px;top:588.0px;letter-spacing:-0.200px;">Корневая система: ОКС</div>
<div class="t" style="left:484.73px;top:588.0px;letter-spacing:-0.500px;">1</div>
<div class="t" style="left:508.68px;top:588.0px;letter-spacing:-0.246px;">07.01.2026</div>
<div class="t" style="left:620.92px;top:588.0px;letter-spacing:0.020px;">Посад…</div>
<div class="t" style="left:690.92px;top:588.0px;letter-spacing:-0.086px;">Поле …</div>
<div class="t" style="left:758.91px;top:588.0px;letter-spacing:-0.126px;">Резерв произво…</div>
<div class="a" style="left:0;top:694px;width:1107px;height:1px;background:#c8c8c8"></div>
<div class="a" style="left:0;top:695px;width:1107px;height:29px;background:#f2f2f2"></div>
<div class="a" style="left:164px;top:695px;width:3px;height:29px;background:#fff"></div>
<div class="vl" style="left:165px;top:695px;height:29px"></div>
<div class="a" style="left:430px;top:695px;width:3px;height:29px;background:#fff"></div>
<div class="vl" style="left:431px;top:695px;height:29px"></div>
<div class="a" style="left:499px;top:695px;width:3px;height:29px;background:#fff"></div>
<div class="vl" style="left:500px;top:695px;height:29px"></div>
<div class="a" style="left:612px;top:695px;width:3px;height:29px;background:#fff"></div>
<div class="vl" style="left:613px;top:695px;height:29px"></div>
<div class="a" style="left:682px;top:695px;width:3px;height:29px;background:#fff"></div>
<div class="vl" style="left:683px;top:695px;height:29px"></div>
<div class="a" style="left:750px;top:695px;width:3px;height:29px;background:#fff"></div>
<div class="vl" style="left:751px;top:695px;height:29px"></div>
<div class="a" style="left:875px;top:695px;width:3px;height:29px;background:#fff"></div>
<div class="vl" style="left:876px;top:695px;height:29px"></div>
<div class="t" style="left:441.29px;top:701.0px;letter-spacing:-0.181px;">4 060,00</div>
<svg class="a" style="left:9px;top:731px" width="5" height="8" viewBox="0 0 5 8"><path d="M4.6 0.6 V7.4 L0.6 4 Z" fill="#cdcdcd"/></svg>
<div class="a" style="left:23px;top:731px;width:946px;height:7.6px;border-radius:4px;background:#d3d3d3"></div>
<div class="a" style="left:23px;top:731px;width:879px;height:7.6px;border-radius:4px;background:#999"></div>
<svg class="a" style="left:979px;top:732px" width="5" height="6" viewBox="0 0 5 6"><path d="M0.2 0 V6 L4.2 3 Z" fill="#444"/></svg>
<div class="a" style="left:1011px;top:725px;width:24px;height:22px;border-left:1px solid #a0a0a0;border-top:1px solid #a0a0a0;background:#fff"></div>
<div class="a" style="left:1035px;top:725px;width:24px;height:22px;border-left:1px solid #a0a0a0;border-top:1px solid #a0a0a0;background:#fff"></div>
<div class="a" style="left:1059px;top:725px;width:24px;height:22px;border-left:1px solid #a0a0a0;border-top:1px solid #a0a0a0;background:#fff"></div>
<div class="a" style="left:1083px;top:725px;width:24px;height:22px;border-left:1px solid #a0a0a0;border-top:1px solid #a0a0a0;background:#fff"></div>
<svg class="a" style="left:1011px;top:725px" width="97" height="22" viewBox="0 0 97 22" fill="#aaa"><rect x="8" y="8" width="9" height="1"/><path d="M12.5 9 L17 13.7 H8 Z"/><path d="M36.5 9 L41 13.7 H32 Z"/><path d="M56 9.2 H65 L60.5 14 Z"/><path d="M80 9.2 H89 L84.5 14 Z"/><rect x="80" y="14" width="9" height="1"/></svg>
</div>
<div class="a" style="left:434px;top:107px;width:318px;height:640px;border:1px solid #5a5a5a;background:#fff;box-shadow:0 0 0 3px #e8e8e8">
<div class="t" style="left:15.22px;top:6.0px;letter-spacing:-0.261px;">Произвольная дата</div>
<div class="t" style="left:15.21px;top:35.0px;letter-spacing:-0.106px;">Начало этого дня</div>
<div class="a" style="left:0;top:58px;width:316px;height:29px;background:#facb23"></div>
<div class="t" style="left:15.21px;top:64.0px;letter-spacing:-0.186px;">Начало этой недели</div>
<div class="t" style="left:15.21px;top:93.0px;letter-spacing:-0.164px;">Начало этой декады</div>
<div class="t" style="left:15.21px;top:122.0px;letter-spacing:-0.190px;">Начало этого месяца</div>
<div class="t" style="left:15.21px;top:151.0px;letter-spacing:-0.238px;">Начало этого квартала</div>
<div class="t" style="left:15.21px;top:180.0px;letter-spacing:-0.102px;">Начало этого полугодия</div>
<div class="t" style="left:15.21px;top:209.0px;letter-spacing:-0.128px;">Начало этого года</div>
<div class="t" style="left:15.21px;top:238.0px;letter-spacing:-0.142px;">Начало вчерашнего дня</div>
<div class="t" style="left:15.21px;top:267.0px;letter-spacing:-0.206px;">Начало прошлой недели</div>
<div class="t" style="left:15.21px;top:296.0px;letter-spacing:-0.187px;">Начало прошлой декады</div>
<div class="t" style="left:15.21px;top:325.0px;letter-spacing:-0.220px;">Начало прошлого месяца</div>
<div class="t" style="left:15.21px;top:354.0px;letter-spacing:-0.260px;">Начало прошлого квартала</div>
<div class="t" style="left:15.21px;top:383.0px;letter-spacing:-0.139px;">Начало прошлого полугодия</div>
<div class="t" style="left:15.21px;top:412.0px;letter-spacing:-0.157px;">Начало прошлого года</div>
<div class="t" style="left:15.21px;top:441.0px;letter-spacing:-0.151px;">Начало завтрашнего дня</div>
<div class="t" style="left:15.21px;top:470.0px;letter-spacing:-0.068px;">Начало следующей недели</div>
<div class="t" style="left:15.21px;top:499.0px;letter-spacing:-0.052px;">Начало следующей декады</div>
<div class="t" style="left:15.21px;top:528.0px;letter-spacing:-0.077px;">Начало следующего месяца</div>
<div class="t" style="left:15.21px;top:557.0px;letter-spacing:-0.125px;">Начало следующего квартала</div>
<div class="t" style="left:15.21px;top:586.0px;letter-spacing:-0.019px;">Начало следующего полугодия</div>
<div class="t" style="left:15.21px;top:615.0px;letter-spacing:-0.007px;">Начало следующего года</div>
</div>
</body></html>
